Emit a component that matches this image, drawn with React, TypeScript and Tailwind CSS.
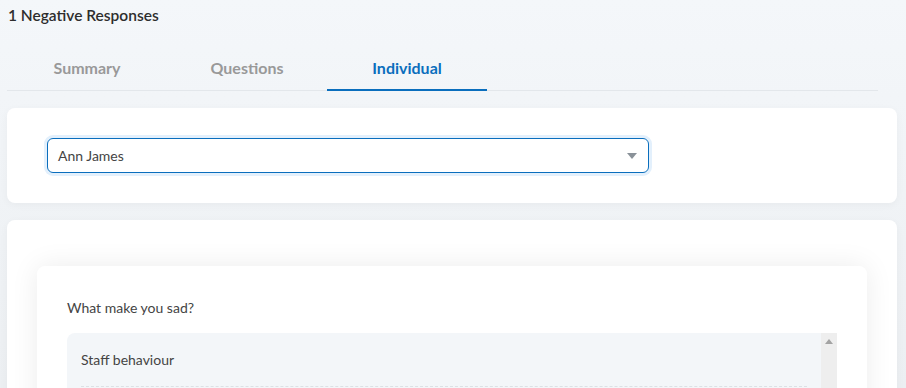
import { useState } from 'react';

const tabs = ['Summary', 'Questions', 'Individual'];

const App = () => {
  const [active, setActive] = useState('Individual');

  return (
    <div
      className="min-h-screen w-[906px] h-[388px] overflow-hidden bg-gradient-to-b from-[#f4f7fa] to-[#eceff2] text-[#333]"
      style={{ fontFamily: 'Lato, "Open Sans", sans-serif' }}
    >
      {/* Header */}
      <div className="px-2 pt-[5px] h-[21px] text-[15.5px] font-semibold leading-[21px] text-[#2d2d2d]">
        1 Negative Responses
      </div>

      {/* Tabs */}
      <div className="ml-[7px] mt-[32px] w-[871px] border-b border-[#e3e7eb]">
        <div className="flex">
          {tabs.map((tab) => {
            const isActive = tab === active;
            return (
              <button
                key={tab}
                onClick={() => setActive(tab)}
                className={`w-[160px] h-[38px] pb-[8px] text-[16px] font-bold leading-[19px] border-b-2 -mb-px ${
                  isActive ? 'text-[#0a6ebd] border-[#0a6ebd]' : 'text-[#999] border-transparent'
                }`}
              >
                {tab}
              </button>
            );
          })}
        </div>
      </div>

      {/* Selector card */}
      <div className="ml-[7px] w-[890px] mt-[17px] h-[95px] rounded-lg bg-white shadow-[0_2px_8px_rgba(0,0,0,0.04)] pt-[30px] pl-[40px]">
        <div className="relative w-[602px] h-[35px] rounded-[6px] border border-[#0a6ebd] ring-[3px] ring-[#e3f0fc] flex items-center px-[10px]">
          <span className="text-[14px] text-[#444]">Ann James</span>
          <span className="absolute right-[11px] top-[14px] w-0 h-0 border-l-[5px] border-r-[5px] border-t-[6px] border-l-transparent border-r-transparent border-t-[#8a9299]" />
        </div>
      </div>

      {/* Response card */}
      <div className="ml-[7px] w-[890px] mt-[17px] h-[200px] rounded-lg bg-white shadow-[0_2px_8px_rgba(0,0,0,0.04)] pt-[46px] px-[30px]">
        <div className="h-[200px] rounded-lg bg-white shadow-[0_0_28px_rgba(0,0,0,0.08)] pt-[33px] pl-[30px] pr-[30px]">
          <p className="text-[14px] leading-[17px] text-[#444]">What make you sad?</p>
          <div className="mt-[17px] flex h-[100px]">
            <div className="flex-1 rounded-tl-lg bg-[#f3f6f9] px-[14px] pt-[18px]">
              <p className="text-[14px] leading-[17px] text-[#444]">Staff behaviour</p>
              <div className="mt-[18px] border-t border-dashed border-[#dde1e5]" />
            </div>
            <div className="w-[16px] bg-[#eeeeee] flex justify-center pt-[6px]">
              <span className="w-0 h-0 border-l-[4px] border-r-[4px] border-b-[5px] border-l-transparent border-r-transparent border-b-[#a3a3a3]" />
            </div>
          </div>
        </div>
      </div>
    </div>
  );
};

export default App;
